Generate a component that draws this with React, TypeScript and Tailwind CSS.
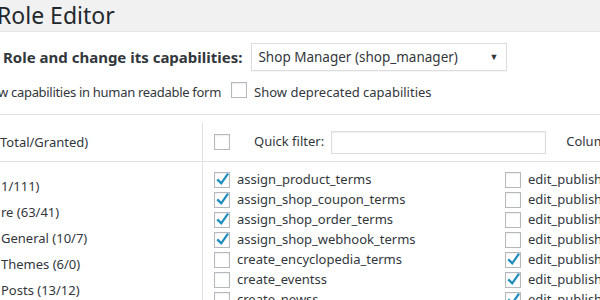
import { useState } from 'react'

type Cap = { name: string; on: boolean }

const leftCaps: Cap[] = [
  { name: 'assign_product_terms', on: true },
  { name: 'assign_shop_coupon_terms', on: true },
  { name: 'assign_shop_order_terms', on: true },
  { name: 'assign_shop_webhook_terms', on: true },
  { name: 'create_encyclopedia_terms', on: false },
  { name: 'create_eventss', on: false },
  { name: 'create_newss', on: false },
]

const rightCaps: Cap[] = [
  { name: 'edit_published_articles', on: false },
  { name: 'edit_published_encyclopedias', on: false },
  { name: 'edit_published_events', on: false },
  { name: 'edit_published_newss', on: false },
  { name: 'edit_published_pages', on: true },
  { name: 'edit_published_posts', on: true },
  { name: 'edit_published_products', on: true },
]

const groups = ['1/111)', 're (63/41)', 'General (10/7)', 'Themes (6/0)', 'Posts (13/12)']

function Box({ checked }: { checked?: boolean }) {
  return (
    <span className="relative inline-block w-4 h-4 shrink-0 border border-[#b4b9be] bg-white shadow-[inset_0_1px_2px_rgba(0,0,0,0.07)]">
      {checked && (
        <svg viewBox="0 0 16 16" className="absolute -left-px -top-[2px] w-[17px] h-[17px]">
          <path d="M3.8 8.6 L6.8 11.6 L12.6 3.4" fill="none" stroke="#1e8cbe" strokeWidth="2.1" strokeLinecap="square" />
        </svg>
      )}
    </span>
  )
}

function CapRow({ cap }: { cap: Cap }) {
  return (
    <div className="flex items-center h-5 gap-[7px] whitespace-nowrap">
      <Box checked={cap.on} />
      <span>{cap.name}</span>
    </div>
  )
}

export default function App() {
  const [filter, setFilter] = useState('')

  return (
    <div className="w-[600px] h-[300px] overflow-hidden bg-white text-[#32373c] font-['Noto_Sans','Open_Sans',sans-serif] text-[13px]">
      <div className="h-8 bg-[#f1f1f1] border-b border-[#e5e5e5] flex items-center">
        <h1 className="ml-[-3px] text-[23px] leading-none text-[#23282d]">Role Editor</h1>
      </div>

      <div className="flex items-center h-[40px] mt-[5px] pl-[3px] gap-[9px]">
        <span className="text-[15px] font-bold whitespace-nowrap">Role and change its capabilities:</span>
        <div className="flex items-center justify-between w-[256px] h-[28px] border border-[#ddd] pl-[6px] pr-[8px] text-[13.5px] shadow-[0_1px_1px_rgba(0,0,0,0.04)]">
          <span>Shop Manager (shop_manager)</span>
          <span className="text-[9px] text-[#32373c]">▼</span>
        </div>
      </div>

      <div className="flex items-center h-[24px] mt-[4px] whitespace-nowrap">
        <span className="ml-[-2px] tracking-[-0.3px]">w capabilities in human readable form</span>
        <span className="ml-[10px]"><Box /></span>
        <span className="ml-[7px]">Show deprecated capabilities</span>
      </div>

      <div className="mt-[9px] border-t border-[#e1e1e1] pt-[8px]">
        <div className="grid grid-cols-[203px_1fr]">
          <div className="h-[39px] border-r border-b border-[#e1e1e1] flex items-center whitespace-nowrap pt-[2px]">
            Total/Granted)
          </div>
          <div className="h-[39px] border-b border-[#e1e1e1] flex items-center pl-[11px] whitespace-nowrap">
            <Box />
            <span className="ml-[24px]">Quick filter:</span>
            <input
              value={filter}
              onChange={e => setFilter(e.target.value)}
              className="ml-[7px] w-[215px] h-[23px] border border-[#ddd] shadow-[inset_0_1px_2px_rgba(0,0,0,0.07)] outline-none"
            />
            <span className="ml-[20px]">Columns:</span>
          </div>

          <div className="border-r border-[#e1e1e1] pt-[12px] h-[200px]">
            {groups.map(g => (
              <div key={g} className="h-[26px] flex items-center whitespace-nowrap pl-[1px]">{g}</div>
            ))}
          </div>
          <div className="flex pl-[11px] pt-[8px] whitespace-nowrap overflow-hidden">
            <div className="w-[291px] shrink-0">
              {leftCaps.map(c => <CapRow key={c.name} cap={c} />)}
            </div>
            <div className="shrink-0">
              {rightCaps.map(c => <CapRow key={c.name} cap={c} />)}
            </div>
          </div>
        </div>
      </div>
    </div>
  )
}
